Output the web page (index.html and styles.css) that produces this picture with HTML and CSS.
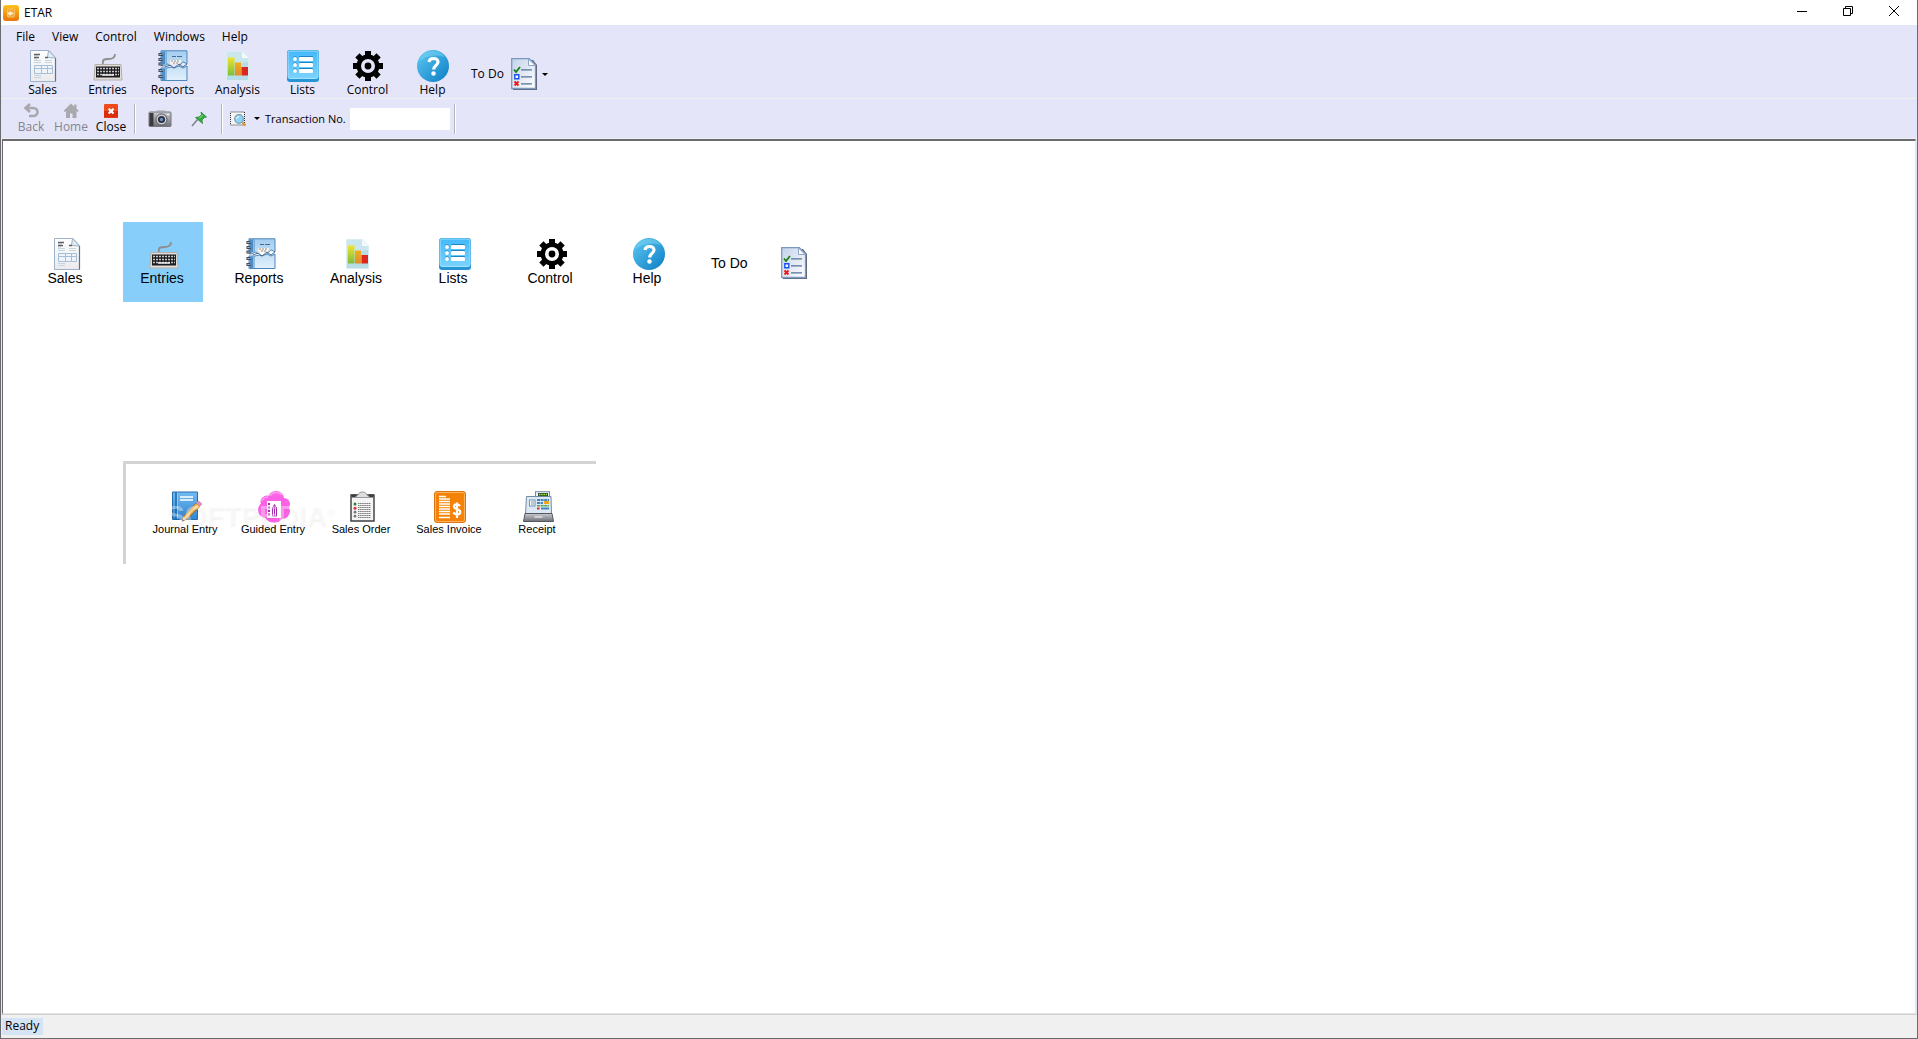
FILE: index.html
```html
<!DOCTYPE html>
<html lang="en">
<head>
    <meta charset="UTF-8">
    <meta name="viewport" content="width=device-width, initial-scale=1.0">
    <title>ETAR</title>
    <link rel="stylesheet" href="styles.css">
</head>
<body>
    <!-- icon sprite -->
    <svg class="sprite" aria-hidden="true">
        <defs>
            <linearGradient id="gOrange" x1="0" y1="0" x2="0" y2="1">
                <stop offset="0" stop-color="#fbc31c"/><stop offset="1" stop-color="#e8740c"/>
            </linearGradient>
            <linearGradient id="gPaper" x1="0" y1="0" x2="0" y2="1">
                <stop offset="0" stop-color="#ffffff"/><stop offset="1" stop-color="#eceaec"/>
            </linearGradient>
            <linearGradient id="gTodo" x1="0" y1="0" x2="1" y2="1">
                <stop offset="0" stop-color="#c4d2ea"/><stop offset="1" stop-color="#ffffff"/>
            </linearGradient>
            <linearGradient id="gBlue" x1="0" y1="0" x2="0" y2="1">
                <stop offset="0" stop-color="#45b9fb"/><stop offset="1" stop-color="#7bd3ff"/>
            </linearGradient>
            <linearGradient id="gBook" x1="0" y1="0" x2="0" y2="1">
                <stop offset="0" stop-color="#a3cdf0"/><stop offset="1" stop-color="#e2f0fb"/>
            </linearGradient>
            <linearGradient id="gHelp" x1="0" y1="0" x2="1" y2="1">
                <stop offset="0" stop-color="#5ccaf2"/><stop offset="1" stop-color="#0d7cc4"/>
            </linearGradient>
            <linearGradient id="gGreen" x1="0" y1="0" x2="0" y2="1">
                <stop offset="0" stop-color="#f2e32c"/><stop offset="1" stop-color="#7fbd3c"/>
            </linearGradient>
            <linearGradient id="gAmber" x1="0" y1="0" x2="0" y2="1">
                <stop offset="0" stop-color="#f0b01c"/><stop offset="1" stop-color="#e58a2c"/>
            </linearGradient>
            <linearGradient id="gJournal" x1="0" y1="0" x2="0" y2="1">
                <stop offset="0" stop-color="#74baf0"/><stop offset="1" stop-color="#2f87d2"/>
            </linearGradient>
            <linearGradient id="gMetal" x1="0" y1="0" x2="0" y2="1">
                <stop offset="0" stop-color="#c9cbd0"/><stop offset="1" stop-color="#6c6f76"/>
            </linearGradient>
        </defs>

        <symbol id="i-app" viewBox="0 0 16 16">
            <rect width="16" height="16" rx="3" fill="url(#gOrange)"/>
            <rect x="4.5" y="4" width="7" height="8" rx="1" fill="#f5a83a" stroke="#f8c064"/>
            <path d="M7 6l1 1 3 1.500-3 1.200-1 1.300-.5-1.500H5v-2h1.500z" fill="#fff3d6"/>
        </symbol>

        <symbol id="i-sales" viewBox="0 0 32 32">
            <path d="M3.500.5h18.500l6.500 7v24h-25z" fill="url(#gPaper)" stroke="#9db2c8"/>
            <path d="M28.500 8v23.500" stroke="#5d7389" stroke-width="1.200"/>
            <path d="M21.500 .5l-1 7 8 .5z" fill="#e3ebf3" stroke="#9db2c8"/>
            <path d="M7 4.500h6M7 7.500h5M18 7.500h3" stroke="#5f6369" stroke-width="1.400"/>
            <path d="M7 5.800h4M7 8.800h3" stroke="#a3a6ab" stroke-width=".8"/>
            <path d="M7 10.500h7M18 10.500h7M7 12.500h7M18 12.500h7M7 25.500h7M7 27.500h7" stroke="#c3d3e0"/>
            <path d="M7.500 15.500h18v8h-18zM7.500 18.500h18M14.500 15.500v8M20.500 15.500v8" fill="#eef4f9" stroke="#a5bfd6"/>
        </symbol>

        <symbol id="i-entries" viewBox="0 0 32 32">
            <path d="M11 14c-1-5 2-5 5-5s7 0 7-5" fill="none" stroke="#8e8e8e" stroke-width="1.800"/>
            <path d="M3 14.500h26l1 15.500H2z" fill="#e0ddd9" stroke="#b5b0aa"/>
            <path d="M4 16.500h24v11H4z" fill="#1d1d20"/>
            <path d="M5 18.500h22M5 21.500h22M5 24.500h22" stroke="#c9c9cc" stroke-width="1.400" stroke-dasharray="2 1"/>
            <path d="M10 25h12" stroke="#f2f2f2" stroke-width="1.500"/>
        </symbol>

        <symbol id="i-reports" viewBox="0 0 32 32">
            <path d="M4 .8h26v13l-4-2-4 4-5-4-4 4-3-2-2 2H4zM4 18h6l4-1 3 1 5-2 4 2 4-2v14.500H4z" fill="url(#gBook)" stroke="#4b87bd"/>
            <path d="M4.500 1.500h5v13h-5zM4.500 18.500h5v12h-5z" fill="#4e8dc4"/>
            <path d="M8.500 2v13M8.500 18.500V30" stroke="#8cbbe0"/>
            <path d="M15 6.500h4M20 6.500h5" stroke="#426b93" stroke-width="1.200"/>
            <path d="M13 10h11v2l-3 4-4-3-4 3z" fill="#f5f2ea"/>
            <path d="M14 11h9M16 13h6" stroke="#8f8f94" stroke-dasharray="2 1"/>
            <path d="M8 17l5-2 4 3 5-4 4 3 4-3" fill="none" stroke="#4c6b8e"/>
            <path d="M5 3.500H2v2h4M5 8.500H2v2h4M5 13H2v2h4M5 19.500H2v2h4M5 25.500H2v2h4" fill="none" stroke="#45474c" stroke-width="1.100"/>
        </symbol>

        <symbol id="i-analysis" viewBox="0 0 32 32">
            <path d="M4.500 1.500h16l6 6.500v22.500h-22z" fill="#cbe7ee" stroke="#d9eef3"/>
            <path d="M5 16c7 3 14-5 21-4v18H5z" fill="#b9dde6"/>
            <path d="M20 1.500V8h6.500z" fill="#f3fafb"/>
            <path d="M6 7.500h6.500v18H6z" fill="url(#gGreen)"/>
            <path d="M13 12.500h6v13h-6z" fill="url(#gAmber)"/>
            <path d="M19.500 17h6.500v8.500h-6.500z" fill="#da2722"/>
        </symbol>

        <symbol id="i-lists" viewBox="0 0 32 32">
            <rect width="32" height="32" rx="3" fill="#2795d3"/>
            <rect x="1" y="1" width="30" height="27.500" rx="2" fill="url(#gBlue)" stroke="#a0e0ff"/>
            <g fill="#1b86c4" transform="translate(0 -1)">
                <circle cx="8" cy="9.500" r="2.200"/><circle cx="8" cy="15.500" r="2.200"/><circle cx="8" cy="21.500" r="2.200"/>
                <rect x="12" y="7" width="14" height="4" rx="1"/><rect x="12" y="13" width="14" height="4" rx="1"/><rect x="12" y="19" width="14" height="4" rx="1"/>
            </g>
            <g fill="#fff">
                <circle cx="8" cy="9" r="2"/><circle cx="8" cy="15" r="2"/><circle cx="8" cy="21" r="2"/>
                <rect x="12" y="7" width="14" height="4" rx="1"/><rect x="12" y="13" width="14" height="4" rx="1"/><rect x="12" y="19" width="14" height="4" rx="1"/>
            </g>
        </symbol>

        <symbol id="i-control" viewBox="0 0 32 32">
            <g fill="#000">
                <rect x="13" y="1" width="6" height="30"/>
                <rect x="13" y="1" width="6" height="30" transform="rotate(45 16 16)"/>
                <rect x="13" y="1" width="6" height="30" transform="rotate(90 16 16)"/>
                <rect x="13" y="1" width="6" height="30" transform="rotate(135 16 16)"/>
                <circle cx="16" cy="16" r="11.500"/>
            </g>
            <circle class="gear-ring" cx="16" cy="16" r="5.200" fill="#000" stroke-width="3.600"/>
        </symbol>

        <symbol id="i-help" viewBox="0 0 32 32">
            <circle cx="16" cy="16" r="16" fill="url(#gHelp)"/>
            <path d="M1.500 12C4 4 10 1 16 1s10 3 12 6C20 4 9 5 1.500 12z" fill="#8adcf6" opacity=".4"/>
            <path d="M12 12c.3-2.500 2-3.500 4.500-3.500 2.700 0 4.500 1.500 4.500 3.500 0 3.500-4.300 3.300-4.300 7.500" fill="none" stroke="#fff" stroke-width="3.200"/>
            <circle cx="16.500" cy="23.500" r="2.200" fill="#fff"/>
        </symbol>

        <symbol id="i-todo" viewBox="0 0 32 32">
            <path d="M5 2h20l4 5v25H5z" fill="#59647a"/>
            <path d="M3.700.7h17.600l6.200 6.300v23.500H3.700z" fill="url(#gTodo)" stroke="#7d99bd" stroke-width="1.300"/>
            <path d="M20.500 1v6.500H27z" fill="#fff" stroke="#8fa7c6"/>
            <path d="M6 11.500l2 2.500 4-5" fill="none" stroke="#158015" stroke-width="1.800"/>
            <path d="M6.800 16.700h4v4h-4z" fill="#fff" stroke="#1550f5" stroke-width="1.400"/>
            <path d="M6.500 23.500l4 4M10.500 23.500l-4 4" stroke="#ee1717" stroke-width="1.900"/>
            <path d="M13 11.800h11M13 18.800h11M13 25.800h11" stroke="#52729b" stroke-width="1.200"/>
        </symbol>

        <symbol id="i-back" viewBox="0 0 16 16">
            <path d="M7 1L2.500 5 7 9M3 5h7c6 0 6 8 0 8H6" fill="none" stroke="#a9a9ad" stroke-width="2.600"/>
        </symbol>

        <symbol id="i-home" viewBox="0 0 16 16">
            <path d="M8 .5L.5 8l1.300 1L3 8v7h4v-4.500h2.500V15h4V8l1 1 1.300-1-2.300-2.500V1.500h-2.300v2z" fill="#a9a9ad"/>
        </symbol>

        <symbol id="i-close" viewBox="0 0 16 16">
            <rect x="1" y="1" width="14" height="14" rx="1" fill="#ee4a1b"/>
            <path d="M1 8h14v6.500H1z" fill="#da2d0b"/>
            <path d="M5.700 5.700l4.800 4.800M10.500 5.700l-4.800 4.800" stroke="#fff" stroke-width="2.200"/>
        </symbol>

        <symbol id="i-camera" viewBox="0 0 24 18">
            <rect x="1" y="2" width="22" height="14.500" rx="1" fill="url(#gMetal)" stroke="#77777c"/>
            <path d="M1.500 3h4v13h-4z" fill="#3b3b3f"/>
            <path d="M8 2l1-1.500h8L18 2z" fill="#a4a5aa"/>
            <circle cx="13.500" cy="9.500" r="5.500" fill="#cfd2da" stroke="#55565c"/>
            <circle cx="13.500" cy="9.500" r="3.600" fill="#2c3040"/>
            <circle cx="13.500" cy="9.500" r="1.700" fill="#6f8fc4"/>
            <path d="M19 4.500h2" stroke="#fff"/>
        </symbol>

        <symbol id="i-pin" viewBox="0 0 16 16">
            <path d="M1 15l5.500-6.500" stroke="#7d8085" stroke-width="1.500"/>
            <path d="M10 1l5.500 5-2 .5-2.500 2.500.5 3.500L4.500 6.500 8 6l2.500-2.500z" fill="#33ad3d" stroke="#1d7d27" stroke-width=".7"/>
            <path d="M8.500 7l3-3" stroke="#a2e59f"/>
        </symbol>

        <symbol id="i-find" viewBox="0 0 16 16">
            <path d="M.5 1h14v13H.5z" fill="#f5f5f5" stroke="#303030" stroke-dasharray="1 1"/>
            <circle cx="9" cy="8" r="4.300" fill="#8ed4f5" stroke="#7a9cb5" stroke-width="1.200"/>
            <path d="M6.500 8A2.500 2.500 0 0 1 9 5.500" fill="none" stroke="#fff"/>
            <path d="M12.500 11.500l3 3" stroke="#d79b45" stroke-width="2.500"/>
        </symbol>

        <symbol id="i-journal" viewBox="0 0 32 32">
            <path d="M2.500 1h25v27.500h-25z" fill="url(#gJournal)" stroke="#246eae"/>
            <path d="M6 1v27.500" stroke="#1f68a7" stroke-width="1.500"/>
            <path d="M7.500 1.500v26.500" stroke="#8fcaf5"/>
            <path d="M10 6h13M10 9h13" stroke="#fff" stroke-width="1.500"/>
            <path d="M13.500 25.500L26 12l4 3.500L17 28l-4.500 2z" fill="#f4a942" stroke="#a36a25" stroke-width=".8"/>
            <path d="M15 27L28 14" stroke="#ffd891" stroke-width="1.300"/>
            <path d="M26 12l2.500-2.500 4 3.500-2.500 2.500z" fill="#d990ba"/>
            <path d="M12.500 30l1-4.500 3 2.700z" fill="#f3ddb8"/>
            <path d="M12 30.500l.6-2 1.500 1.300z" fill="#333"/>
        </symbol>

        <symbol id="i-guided" viewBox="0 0 32 32">
            <g fill="#fb62e6">
                <circle cx="18" cy="8" r="8"/>
                <circle cx="9" cy="11" r="6.500"/>
                <circle cx="26" cy="13" r="6"/>
                <circle cx="8" cy="19" r="8"/>
                <circle cx="24" cy="20" r="8"/>
                <circle cx="16" cy="22" r="10"/>
            </g>
            <path d="M12 5c2-4 8-5 12-1M4 10c1-3 3-4 6-4" fill="none" stroke="#ff9df3" stroke-width="1.500"/>
            <rect x="9" y="10" width="14" height="17" fill="#fff"/>
            <path d="M11 12v14" stroke="#a62bb0" stroke-width="2" stroke-dasharray="2 1.500"/>
            <path d="M14.500 25v-8l2-3.500 2 3.500v8zM14 17h5M16.500 14v11" fill="none" stroke="#a62bb0"/>
        </symbol>

        <symbol id="i-order" viewBox="0 0 32 32">
            <path d="M5 4h23v26H5z" fill="#f4f4f4" stroke="#3c3c40" stroke-width="1.400"/>
            <path d="M5.500 3.500h5v3h-5zM22.500 3.500h5v3h-5z" fill="#3c3c40"/>
            <path d="M9 6.500l3-2.500c1-4 8-4 9 0l3 2.500z" fill="#dedede" stroke="#98989b"/>
            <circle cx="9" cy="13" r="1.500" fill="#238332"/><circle cx="9" cy="17.200" r="1.500" fill="#d93333"/>
            <circle cx="9" cy="21.200" r="1.400" fill="#777"/><circle cx="9" cy="25.200" r="1.400" fill="#777"/>
            <path d="M12 12.500h13M12 14.500h13M12 16.500h13M12 18.500h13M12 20.500h13M12 22.500h13M12 24.500h13M12 26.500h13" stroke="#777" stroke-dasharray="1.500 .6"/>
        </symbol>

        <symbol id="i-invoice" viewBox="0 0 32 32">
            <rect x=".5" y=".5" width="31" height="31" rx="2.500" fill="#f48206" stroke="#dd7411"/>
            <rect x="1.500" y="1.500" width="29" height="29" rx="2" fill="none" stroke="#ffb35f"/>
            <path d="M5 5.500h7M5 8h11M5 10.500h11M5 13h11M5 15.500h11M5 18h11M5 20.500h11M5 23h11M5 26.500h11" stroke="#fff" stroke-width="1.300"/>
            <path d="M26 15c-2-2.500-6-2-6 .5 0 3.500 6.300 2 6.300 5.500 0 3-5 3.300-7 .5M23 11.500V27" fill="none" stroke="#fff" stroke-width="2.200"/>
        </symbol>

        <symbol id="i-receipt" viewBox="0 0 32 32">
            <rect x="13.500" y=".7" width="14" height="8" fill="#eef4fa" stroke="#748ba3"/>
            <rect x="16" y="2" width="10" height="3" fill="#26472a"/>
            <path d="M17 3.500h8" stroke="#a8e92f" stroke-width="1.500" stroke-dasharray="1.500 .7"/>
            <path d="M4.500 5.500h24.500l.5 17.500H3.500z" fill="#dbe9f6" stroke="#748ba3"/>
            <rect x="7.500" y="9" width="5.500" height="6" fill="#fff" stroke="#7690aa"/>
            <path d="M9 11h3M9 13h3" stroke="#7690aa"/>
            <path d="M15 9h12M15 12h6" stroke="#4785bd" stroke-width="2" stroke-dasharray="3 .6"/>
            <path d="M22 11.500h5" stroke="#f4a51f" stroke-width="3"/>
            <path d="M15 14.800h12" stroke="#5aa549" stroke-width="1.500" stroke-dasharray="3 .6"/>
            <path d="M15 17.500h2.500" stroke="#dd2b2b" stroke-width="2"/>
            <path d="M19 17.500h8" stroke="#4785bd" stroke-width="2"/>
            <path d="M3 22.500h27l1.500 8H1.500z" fill="url(#gMetal)" stroke="#55585d"/>
            <path d="M12.500 26h8" stroke="#fff"/>
        </symbol>
    </svg>

    <div class="window">
        <header class="titlebar">
            <svg class="icon-16"><use href="#i-app"/></svg>
            <span class="title">ETAR</span>
            <div class="window-buttons">
                <button type="button" aria-label="Minimize"><svg viewBox="0 0 10 10"><path d="M0 5.500h10"/></svg></button>
                <button type="button" aria-label="Restore"><svg viewBox="0 0 10 10"><path d="M.5 2.500h7v7h-7zM2.500 2.500v-2h7v7h-2"/></svg></button>
                <button type="button" aria-label="Close window"><svg viewBox="0 0 10 10"><path d="M0 0l10 10M10 0L0 10"/></svg></button>
            </div>
        </header>

        <nav class="menubar">
            <button type="button">File</button>
            <button type="button">View</button>
            <button type="button">Control</button>
            <button type="button">Windows</button>
            <button type="button">Help</button>
        </nav>

        <div class="toolbar">
            <button type="button" class="tool"><svg class="icon-32"><use href="#i-sales"/></svg>Sales</button>
            <button type="button" class="tool"><svg class="icon-32"><use href="#i-entries"/></svg>Entries</button>
            <button type="button" class="tool"><svg class="icon-32"><use href="#i-reports"/></svg>Reports</button>
            <button type="button" class="tool"><svg class="icon-32"><use href="#i-analysis"/></svg>Analysis</button>
            <button type="button" class="tool"><svg class="icon-32"><use href="#i-lists"/></svg>Lists</button>
            <button type="button" class="tool"><svg class="icon-32"><use href="#i-control"/></svg>Control</button>
            <button type="button" class="tool"><svg class="icon-32"><use href="#i-help"/></svg>Help</button>
            <button type="button" class="tool-todo">To Do<svg class="icon-32"><use href="#i-todo"/></svg><span class="caret"></span></button>
        </div>

        <div class="toolbar-nav">
            <button type="button" class="nav-btn" disabled><svg class="icon-16"><use href="#i-back"/></svg>Back</button>
            <button type="button" class="nav-btn" disabled><svg class="icon-16"><use href="#i-home"/></svg>Home</button>
            <button type="button" class="nav-btn"><svg class="icon-16"><use href="#i-close"/></svg>Close</button>
            <span class="separator"></span>
            <button type="button" class="icon-btn" aria-label="Snapshot"><svg class="icon-camera"><use href="#i-camera"/></svg></button>
            <button type="button" class="icon-btn" aria-label="Pin"><svg class="icon-16"><use href="#i-pin"/></svg></button>
            <span class="separator"></span>
            <button type="button" class="find-btn" aria-label="Search by"><svg class="icon-16"><use href="#i-find"/></svg><span class="caret"></span></button>
            <label for="transactionNo">Transaction No.</label>
            <input type="text" id="transactionNo">
            <span class="separator"></span>
        </div>

        <main class="workspace">
            <div class="tiles">
                <button type="button" class="tile"><svg class="icon-32"><use href="#i-sales"/></svg>Sales</button>
                <button type="button" class="tile active"><svg class="icon-32"><use href="#i-entries"/></svg>Entries</button>
                <button type="button" class="tile"><svg class="icon-32"><use href="#i-reports"/></svg>Reports</button>
                <button type="button" class="tile"><svg class="icon-32"><use href="#i-analysis"/></svg>Analysis</button>
                <button type="button" class="tile"><svg class="icon-32"><use href="#i-lists"/></svg>Lists</button>
                <button type="button" class="tile"><svg class="icon-32"><use href="#i-control"/></svg>Control</button>
                <button type="button" class="tile"><svg class="icon-32"><use href="#i-help"/></svg>Help</button>
                <button type="button" class="tile-todo">To Do<svg class="icon-32"><use href="#i-todo"/></svg></button>
            </div>

            <section class="subpanel">
                <button type="button" class="entry"><svg class="icon-32"><use href="#i-journal"/></svg>Journal Entry</button>
                <button type="button" class="entry"><svg class="icon-32"><use href="#i-guided"/></svg>Guided Entry</button>
                <button type="button" class="entry"><svg class="icon-32"><use href="#i-order"/></svg>Sales Order</button>
                <button type="button" class="entry"><svg class="icon-32"><use href="#i-invoice"/></svg>Sales Invoice</button>
                <button type="button" class="entry"><svg class="icon-32"><use href="#i-receipt"/></svg>Receipt</button>
                <div class="watermark">SOFTPEDIA<sup>®</sup></div>
            </section>
        </main>

        <footer class="statusbar"><span>Ready</span></footer>
    </div>
</body>
</html>
```
FILE: styles.css
```css
:root {
    --bar-color: #e4e5f9;
    --frame-color: #6b6b6f;
    --active-color: #87cefa;
    --ui-font: "Open Sans", "Noto Sans", sans-serif;
    --form-font: "Liberation Sans", Arial, sans-serif;
}

* {
    box-sizing: border-box;
}

body {
    margin: 0;
    font-family: var(--ui-font);
    font-size: 12px;
    line-height: 16px;
    color: #000;
}

button {
    padding: 0;
    border: none;
    background: none;
    color: inherit;
    font: inherit;
}

svg {
    display: block;
    flex: none;
}

.sprite {
    position: absolute;
    width: 0;
    height: 0;
}

.gear-ring {
    stroke: var(--ring-color, #fff);
}

.icon-16 {
    width: 16px;
    height: 16px;
}

.icon-32 {
    width: 32px;
    height: 32px;
}

.icon-camera {
    width: 24px;
    height: 18px;
}

.window {
    display: flex;
    flex-direction: column;
    min-height: 100vh;
    border: 1px solid var(--frame-color);
    border-top: none;
    background-color: var(--bar-color);
}

/* title bar */
.titlebar {
    display: flex;
    align-items: center;
    height: 25px;
    padding-left: 2px;
    background-color: #fff;
}

.title {
    margin-left: 5px;
}

.window-buttons {
    display: flex;
    align-self: flex-start;
    margin-left: auto;
}

.window-buttons button {
    display: flex;
    align-items: center;
    justify-content: center;
    width: 46px;
    height: 22px;
}

.window-buttons svg {
    width: 10px;
    height: 10px;
    fill: none;
    stroke: #000;
}

/* menu */
.menubar {
    display: flex;
    gap: 17px;
    height: 24px;
    padding-left: 15px;
}

/* main toolbar */
.toolbar {
    --ring-color: var(--bar-color);
    display: flex;
    height: 50px;
    padding: 1px 0 0 9px;
    border-bottom: 1px solid #f0f0f0;
}

.tool {
    display: flex;
    flex-direction: column;
    align-items: center;
    width: 65px;
}

.tool-todo {
    display: flex;
    align-items: center;
    gap: 4px;
    margin-left: 6px;
}

.tool-todo .caret {
    margin-left: -2px;
}

.caret {
    border: 3px solid transparent;
    border-top-color: #000;
    border-bottom: none;
}

/* navigation toolbar */
.toolbar-nav {
    display: flex;
    align-items: center;
    height: 40px;
    padding-left: 10px;
    border-bottom: 1px solid #f0f0f0;
}

.nav-btn {
    display: flex;
    flex-direction: column;
    align-items: center;
    width: 40px;
}

.nav-btn:disabled {
    color: #85858c;
}

.separator {
    width: 2px;
    height: 30px;
    margin: 0 4px 0 3px;
    border-left: 1px solid #b4b4bc;
    border-right: 1px solid #fff;
}

.icon-btn {
    display: flex;
    justify-content: center;
    width: 39px;
}

.find-btn {
    display: flex;
    align-items: center;
    gap: 8px;
    margin: 0 5px 0 3px;
}

.toolbar-nav label {
    font-size: 11px;
}

.toolbar-nav input {
    width: 100px;
    height: 22px;
    margin: 0 1px 0 4px;
    padding: 0 4px;
    border: none;
    background-color: #fff;
    font: inherit;
}

/* workspace */
.workspace {
    flex: 1;
    margin: 0 1px;
    padding: 81px 0 0 23px;
    border: 1px solid #e3e3e3;
    border-top: 2px solid var(--frame-color);
    border-left: 1px solid var(--frame-color);
    background-color: #fff;
    font-family: var(--form-font);
}

.tiles {
    display: flex;
    gap: 17px;
    font-size: 14px;
}

.tile {
    display: flex;
    flex-direction: column;
    align-items: center;
    width: 80px;
    height: 80px;
    padding: 16px 2px 0 0;
}

.tile .icon-32 {
    margin-left: 4px;
}

.tile.active {
    background-color: var(--active-color);
}

.tile-todo {
    display: flex;
    align-items: center;
    gap: 30px;
    margin-left: 6px;
    padding-top: 2px;
}

.subpanel {
    position: relative;
    display: flex;
    width: 473px;
    height: 103px;
    margin: 159px 0 0 97px;
    padding: 27px 0 0 15px;
    border-top: 3px solid #d3d3d3;
    border-left: 3px solid #d3d3d3;
    font-size: 11px;
    line-height: 12px;
}

.entry {
    display: flex;
    flex-direction: column;
    align-items: center;
    width: 88px;
}

.entry .icon-32 {
    margin-left: 2px;
}

.watermark {
    position: absolute;
    top: 34px;
    left: 40px;
    color: rgba(255, 255, 255, 0.4);
    font-size: 28px;
    font-weight: bold;
    line-height: 36px;
    text-shadow: 1px 2px 2px rgba(0, 0, 0, 0.05);
    pointer-events: none;
}

.watermark sup {
    font-size: 11px;
    line-height: 0;
}

/* status bar */
.statusbar {
    height: 24px;
    padding: 3px 1px;
    border-top: 1px solid #d0d0d0;
    background-color: #f0f0f0;
}

.statusbar span {
    display: inline-block;
    padding: 0 4px 1px 3px;
    background-color: #d5e4f4;
}
```
